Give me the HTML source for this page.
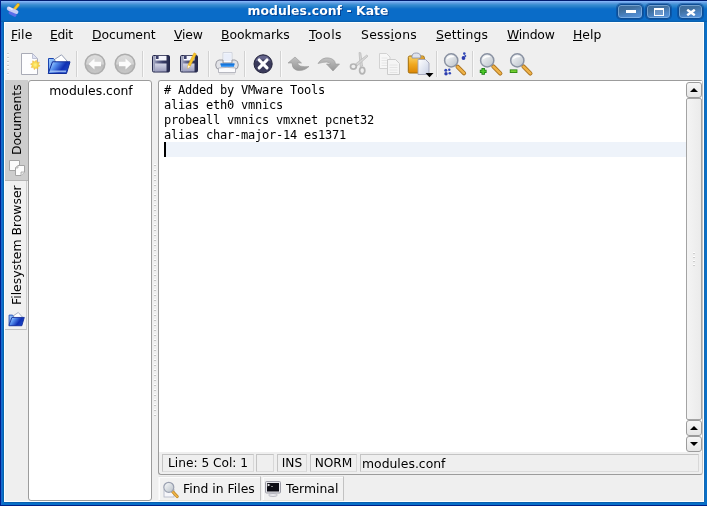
<!DOCTYPE html>
<html>
<head>
<meta charset="utf-8">
<title>modules.conf - Kate</title>
<style>
html,body{margin:0;padding:0;}
body{width:707px;height:506px;overflow:hidden;background:#0a6cc8;font-family:"DejaVu Sans","Liberation Sans",sans-serif;font-size:12.4px;color:#000;}
#win{position:absolute;left:0;top:0;width:707px;height:506px;background:#0870c8;overflow:hidden;will-change:transform;}
.abs{position:absolute;}
#titlebar{position:absolute;left:0;top:0;width:707px;height:22px;
 background:linear-gradient(to bottom,#001c70 0px,#001c70 1px,#80b4f8 1px,#80b4f8 2px,#6aa4e8 2px,#6aa4e8 3px,#5498dc 3px,#5498dc 4px,#4090d4 4px,#4090d4 5px,#3088d0 5px,#3088d0 6px,#2880cc 6px,#2880cc 7px,#1c78c8 7px,#1c78c8 8px,#1070c8 8px,#1070c8 9px,#0c6cc8 9px,#0a6cc8 10px,#0a6cc8 20px,#0868c0 20px,#0868c0 21px,#0860b0 21px,#0860b0 22px);}
#title{position:absolute;left:0;top:3px;width:636px;text-align:center;color:#fff;font-weight:bold;font-size:12.4px;line-height:15px;white-space:nowrap;letter-spacing:.06px;text-shadow:1px 1px 0 rgba(0,30,100,.55);}
#edgeL{position:absolute;left:0;top:0;width:1px;height:506px;background:#00208c;}
#edgeL2{position:absolute;left:1px;top:22px;width:1px;height:483px;background:#1a68d0;}#edgeL3{position:absolute;left:3px;top:22px;width:1px;height:480px;background:#0862ac;}
#edgeR{position:absolute;left:704px;top:22px;width:1px;height:480px;background:#1868b0;}
#edgeB{position:absolute;left:0;top:505px;width:707px;height:1px;background:#002088;}#edgeB2{position:absolute;left:4px;top:502px;width:700px;height:1px;background:#0860b0;}
#client{position:absolute;left:4px;top:22px;width:700px;height:480px;background:#efefef;}
.tbtn{position:absolute;top:4px;height:15px;border-radius:4px;border:1px solid #0c4c94;box-sizing:border-box;
 background:linear-gradient(165deg,#3c6c9e 0%,#41709f 35%,#4c84c4 65%,#5a98e0 100%);box-shadow:inset 0 0 0 1px rgba(150,195,240,.6),0 0 0 1px rgba(8,60,130,.45);}
#menubar{position:absolute;left:0;top:0;width:700px;height:25px;border-top:1px solid #f0fbff;box-sizing:border-box;background:linear-gradient(to bottom,#f2f0ee 0,#eef0f4 2px,#ecf0f6 4px,#efefef 7px,#efefef 100%);}
.mi{position:absolute;top:4px;line-height:16px;white-space:nowrap;}
.mi u{text-decoration:underline;text-underline-offset:0.5px;text-decoration-thickness:1px;}
#toolbar{position:absolute;left:0;top:25px;width:700px;height:33px;}
.sep{position:absolute;top:4px;width:1px;height:26px;background:#d2d2d2;border-right:1px solid #f9f9f9;}
.ico{position:absolute;}
#sidetabs{position:absolute;left:0;top:58px;width:24px;height:422px;}
.vtab{position:absolute;left:1px;width:21px;box-sizing:border-box;}
.vtxt{position:absolute;white-space:nowrap;transform-origin:0 0;transform:rotate(-90deg);line-height:16px;height:16px;}
#list{position:absolute;left:24px;top:58px;width:124px;height:421px;background:#fff;border:1px solid #9c9c9c;border-radius:3px;box-sizing:border-box;}
#list .item{position:absolute;left:1px;top:1px;width:122px;text-align:center;line-height:17px;}
#editframe{position:absolute;left:154px;top:58px;width:545px;height:395px;border:1px solid #9c9c9c;border-right-color:#c4c4c4;border-radius:3px;box-sizing:border-box;}
#edit{position:absolute;left:0;top:0;width:527px;height:371px;background:#fff;border-radius:2px 0 0 0;}
#code{position:absolute;left:5px;top:2px;margin:0;font-family:"DejaVu Sans Mono","Liberation Mono",monospace;font-size:12px;letter-spacing:-0.2246px;line-height:15px;white-space:pre;}
#curline{position:absolute;left:5px;top:61px;width:522px;height:15px;background:#eef3fa;}
#caret{position:absolute;left:5px;top:61px;width:2px;height:15px;background:#000;}
.sbtn{position:absolute;left:0;width:16px;height:16px;box-sizing:border-box;border:1px solid #9c9c9c;border-radius:3px;background:linear-gradient(to bottom,#f6f6f6,#e6e6e6);}
.sbtn:after{content:"";position:absolute;left:3px;top:5px;border-left:4px solid transparent;border-right:4px solid transparent;}
.sbtn.up:after{border-bottom:4px solid #000;}
.sbtn.dn:after{border-top:4px solid #000;top:5px;}
.sp{position:absolute;top:373px;height:18px;box-sizing:border-box;border:1px solid #c4c4c4;border-right-color:#d8d8d8;border-bottom-color:#dcdcdc;line-height:17px;white-space:nowrap;font-size:12.2px;}
.btab{position:absolute;top:454px;height:25px;box-sizing:border-box;border:1px solid #e2e2e2;border-right-color:#c2c2c2;border-left-color:#f6f6f6;border-bottom-color:#e6e4dc;background:#f1f1f1;box-shadow:inset 1px 1px 0 #fcfcfc;line-height:22px;white-space:nowrap;}
</style>
</head>
<body>
<div id="win">
<svg width="0" height="0" style="position:absolute">
 <defs>
  <linearGradient id="gFlap" x1="0" y1="0.2" x2="1" y2="0.6"><stop offset="0" stop-color="#c0e0ff"/><stop offset=".3" stop-color="#5a94f0"/><stop offset=".68" stop-color="#1030b4"/><stop offset="1" stop-color="#1c48c8"/></linearGradient>
  <linearGradient id="gBack" x1="0" y1="0" x2="1" y2="1"><stop offset="0" stop-color="#a4d0ff"/><stop offset="1" stop-color="#2a68d8"/></linearGradient>
  <radialGradient id="gStar"><stop offset="0" stop-color="#fff480"/><stop offset=".6" stop-color="#f8d43c"/><stop offset="1" stop-color="#f0b030"/></radialGradient>
  <linearGradient id="gLens" x1="0" y1="0" x2="1" y2="1"><stop offset="0" stop-color="#fbfcfd"/><stop offset="1" stop-color="#b8c0c8"/></linearGradient>
 <linearGradient id="gDis" x1="0" y1="0" x2="0" y2="1"><stop offset="0" stop-color="#dedede"/><stop offset=".5" stop-color="#d2d2d2"/><stop offset=".56" stop-color="#bcbcbc"/><stop offset="1" stop-color="#c8c8c8"/></linearGradient>
 <linearGradient id="gFlop" x1="0" y1="0" x2="1" y2="0"><stop offset="0" stop-color="#b8bcd0"/><stop offset=".3" stop-color="#6a6e94"/><stop offset=".6" stop-color="#3a3e68"/><stop offset="1" stop-color="#262a4c"/></linearGradient>
  <linearGradient id="gShut" x1="0" y1="0" x2="0" y2="1"><stop offset="0" stop-color="#d4d6e6"/><stop offset="1" stop-color="#9a9cbc"/></linearGradient>
  
 <linearGradient id="gArr" x1="0" y1="0" x2="0" y2="1"><stop offset="0" stop-color="#c2c2c2"/><stop offset="1" stop-color="#969696"/></linearGradient>
  <linearGradient id="gClip" x1="0" y1="0" x2="0" y2="1"><stop offset="0" stop-color="#fad468"/><stop offset=".5" stop-color="#f0a820"/><stop offset="1" stop-color="#dc8604"/></linearGradient>
  <linearGradient id="gPap" x1="0" y1="0" x2="1" y2="1"><stop offset="0" stop-color="#ffffff"/><stop offset="1" stop-color="#c8d0e4"/></linearGradient>
 </defs>
</svg>
 <div id="titlebar">
  <div id="title">modules.conf - Kate</div>
  <svg class="abs" style="left:6px;top:2px" width="18" height="18" viewBox="0 0 18 18">
   <path d="M12.2 2.800 L8.2 7.600" stroke="#c89a18" stroke-width="3.2" stroke-linecap="round"/>
   <path d="M12.2 2.800 L8.2 7.600" stroke="#f6c828" stroke-width="2.2" stroke-linecap="round"/>
   <path d="M4.4 10.600 L8.800 13" stroke="#5c6ce8" stroke-width="3.6" stroke-linecap="round"/>
   <path d="M2.800 6.600 L10.400 10" stroke="#c6cbf4" stroke-width="4" stroke-linecap="round"/>
   <path d="M3 5.800 L6 7.200" stroke="#e4e7fb" stroke-width="1.6" stroke-linecap="round"/>
  </svg>
  <div class="tbtn" style="left:617px;width:26px"><div class="abs" style="left:8px;top:5px;width:10px;height:3px;background:#fff"></div></div>
  <div class="tbtn" style="left:646px;width:25px"><div class="abs" style="left:7px;top:3px;width:10px;height:8px;box-sizing:border-box;border:1px solid #fff;border-top-width:2px;background:rgba(150,180,220,.45)"></div></div>
  <div class="tbtn" style="left:678px;width:25px">
   <svg class="abs" style="left:7px;top:4px" width="10" height="7" viewBox="0 0 10 7"><path d="M1.2 .8 L8.800 6.200 M8.800 .8 L1.2 6.200" stroke="#fff" stroke-width="2.5" fill="none"/></svg>
  </div>
 </div>
 <div id="edgeL"></div><div id="edgeL2"></div><div id="edgeL3"></div><div id="edgeR"></div><div id="edgeB"></div><div id="edgeB2"></div>

 <div id="client">
  <div class="abs" style="left:0;top:0;width:700px;height:480px;box-shadow:inset 0 0 0 1px #fbfeff;z-index:5;pointer-events:none"></div>
  <div id="menubar">
   <span class="mi" style="left:7px;letter-spacing:.2px"><u>F</u>ile</span>
   <span class="mi" style="left:46px;letter-spacing:-.3px"><u>E</u>dit</span>
   <span class="mi" style="left:88px;letter-spacing:-.1px"><u>D</u>ocument</span>
   <span class="mi" style="left:170px;letter-spacing:-.2px"><u>V</u>iew</span>
   <span class="mi" style="left:217px;letter-spacing:-.08px"><u>B</u>ookmarks</span>
   <span class="mi" style="left:305px;letter-spacing:.5px"><u>T</u>ools</span>
   <span class="mi" style="left:357px;letter-spacing:.28px">Sess<u>i</u>ons</span>
   <span class="mi" style="left:432px;letter-spacing:.15px"><u>S</u>ettings</span>
   <span class="mi" style="left:503px;letter-spacing:-.2px"><u>W</u>indow</span>
   <span class="mi" style="left:569px"><u>H</u>elp</span>
  </div>

  <div id="toolbar">
   <div class="abs" style="left:3px;top:6px;width:2px;height:24px;background:repeating-linear-gradient(to bottom,#cccccc 0,#cccccc 1px,#fbfbfb 1px,#fbfbfb 2px,#efefef 2px,#efefef 4px)"></div>
   <!-- new -->
   <svg class="ico" style="left:15px;top:5px" width="24" height="24" viewBox="0 0 24 24">
    <path d="M2.5 1.5 H13.5 L18.5 6.500 V22.500 H2.5 Z" fill="#fdfdfe" stroke="#a9abb6" stroke-width="1"/>
    <path d="M13.5 1.5 V6.500 H18.5 Z" fill="#dfe3f4" stroke="#b4b8cc" stroke-width=".8"/>
    <path d="M17.3 8.1 L18.1 10.2 L20.4 10.2 L19.5 12.3 L21.1 13.9 L19.0 14.7 L19.0 17.0 L16.9 16.1 L15.3 17.7 L14.5 15.6 L12.2 15.6 L13.1 13.5 L11.5 11.9 L13.6 11.1 L13.6 8.8 L15.7 9.7Z" fill="url(#gStar)" stroke="#f0c040" stroke-width=".5" opacity=".92"/>
   </svg>
   <!-- open -->
   <svg class="ico" style="left:43px;top:6px" width="24" height="22" viewBox="0 0 24 22">
    <path d="M1.5 5.500 H6.500 L8 7 H12 V19.500 H1.5 Z" fill="url(#gBack)" stroke="#1a44b0" stroke-width="1"/>
    <path d="M7.5 6.500 L14.500 1.8 L20.500 8.500 L10 12 Z" fill="#ffffff" stroke="#6c7898" stroke-width=".7"/>
    <path d="M5.5 8.800 H23 L19.500 20.500 H1.2 Z" fill="url(#gFlap)" stroke="#102c98" stroke-width="1"/>
    <path d="M3.2 17.500 H19.300 L18.800 19.300 H2.5 Z" fill="#a8c8f8" opacity=".85"/>
   </svg>
   <div class="sep" style="left:72px"></div>
   <!-- back -->
   <svg class="ico" style="left:80px;top:6px" width="22" height="22" viewBox="0 0 22 22">
    <circle cx="11" cy="11" r="9.800" fill="url(#gDis)" stroke="#adadad" stroke-width="1.5"/>
    
    <path d="M4.5 11 L10.5 5.5 V8.8 H17 V13.2 H10.5 V16.5 Z" fill="#fbfbfb"/>
   </svg>
   <!-- fwd -->
   <svg class="ico" style="left:110px;top:6px" width="22" height="22" viewBox="0 0 22 22">
    <circle cx="11" cy="11" r="9.800" fill="url(#gDis)" stroke="#adadad" stroke-width="1.5"/>
    
    <path d="M17.5 11 L11.5 5.5 V8.8 H5 V13.2 H11.5 V16.5 Z" fill="#fbfbfb"/>
   </svg>
   <div class="sep" style="left:138px"></div>
   <!-- save -->
   <svg class="ico" style="left:148px;top:8px" width="19" height="19" viewBox="0 0 19 19"><g><rect x=".5" y=".5" width="17" height="16.500" rx="1.2" fill="url(#gFlop)" stroke="#23264a" stroke-width="1"/>
   <rect x="3.5" y=".8" width="11" height="4.700" fill="#f4f5fc"/><rect x="4" y="1" width="2.600" height="3" fill="#3c406c"/>
   <rect x="3" y="8.500" width="11.500" height="8" fill="url(#gShut)"/></g></svg>
   <!-- save as -->
   <svg class="ico" style="left:176px;top:4px" width="22" height="23" viewBox="0 0 22 23">
    <g transform="translate(0,4)"><rect x=".5" y=".5" width="17" height="16.500" rx="1.2" fill="url(#gFlop)" stroke="#23264a" stroke-width="1"/>
   <rect x="3.5" y=".8" width="11" height="4.700" fill="#f4f5fc"/><rect x="4" y="1" width="2.600" height="3" fill="#3c406c"/>
   <rect x="3" y="8.500" width="11.500" height="8" fill="url(#gShut)"/></g>
    <path d="M14.040 1.820 L16.360 2.980 L10.190 15.320 L7.700 17.400 L7.870 14.160 Z" fill="#f8c62c" stroke="#d8a018" stroke-width=".5"/>
    <path d="M7.870 14.160 L10.190 15.320 L7.700 17.400 Z" fill="#fff6e0"/>
   </svg>
   <div class="sep" style="left:204px"></div>
   <!-- print -->
   <svg class="ico" style="left:211px;top:5px" width="24" height="24" viewBox="0 0 24 24">
    <path d="M8 .6 H17 V11 H8 Z" fill="#fcfdff" stroke="#c4cad8" stroke-width=".8"/>
    <path d="M9 1.5 H16 V9 H9 Z" fill="#e9eefa"/>
    <path d="M4 8 H8 V11 H17 V8 H20 Q23.300 8.500 23.300 13 Q23.300 17 20 17.500 H4 Q.7 17 .7 13 Q.7 8.500 4 8 Z" fill="#e2e3e8" stroke="#8e9098" stroke-width=".9"/>
    <path d="M5.500 11.600 H19.500 L19 14.800 H6 Z" fill="#1f86ee"/>
    <path d="M5.500 11.600 H19.500 V12.600 H5.500 Z" fill="#1668c8"/>
    <path d="M3.500 16 Q12 14.800 20.500 16 V20.500 H3.500 Z" fill="#fbfbfd" stroke="#a8aab4" stroke-width=".8"/>
    <path d="M4 22 H20" stroke="#d2d2d6" stroke-width="1.2"/>
   </svg>
   <div class="sep" style="left:240px"></div>
   <!-- close -->
   <svg class="ico" style="left:249px;top:6px" width="21" height="21" viewBox="0 0 21 21">
    <circle cx="10.100" cy="10.900" r="9.100" fill="#3b3b5b" stroke="#23233c" stroke-width="1"/>
    <path d="M2.500 8.500 A7.800 7.800 0 0 1 17.700 8.500 Q10.100 4.500 2.500 8.500Z" fill="#74749c" opacity=".75"/>
    <path d="M6.200 7 L14 14.800 M14 7 L6.200 14.800" stroke="#fff" stroke-width="3.100" stroke-linecap="round"/>
   </svg>
   <div class="sep" style="left:276px"></div>
   <!-- undo -->
   <svg class="ico" style="left:283px;top:9px" width="24" height="16" viewBox="0 0 24 16">
    <path d="M1 7 L8 1 L14.500 7 H10.500 Q11 11.500 22 10.500 Q16 16 9 14 Q5 12.500 5 7 Z" fill="url(#gArr)" stroke="#979797" stroke-width=".6"/>
   </svg>
   <!-- redo -->
   <svg class="ico" style="left:313px;top:9px" width="24" height="16" viewBox="0 0 24 16">
    <path d="M1 7.500 Q5 1 12 2 Q18 3 18.500 8 H22.500 L16 15 L9.500 8 H13.500 Q12 4.500 1 7.500 Z" fill="url(#gArr)" stroke="#979797" stroke-width=".6"/>
   </svg>
   <!-- cut -->
   <svg class="ico" style="left:345px;top:4px" width="22" height="25" viewBox="0 0 22 25">
    <path d="M10 1.5 L11.800 1.8 L13.600 15 L11.200 15.500 Z" fill="#d6d6d6" stroke="#b2b2b2" stroke-width=".6"/>
    <path d="M17.800 4 L19 5.200 L8 15 L6.500 13 Z" fill="#d6d6d6" stroke="#b2b2b2" stroke-width=".6"/>
    <ellipse cx="4.400" cy="15.600" rx="2.900" ry="2.600" fill="none" stroke="#b4b4b4" stroke-width="1.7"/>
    <ellipse cx="13.200" cy="19.600" rx="2.600" ry="3.300" fill="none" stroke="#b4b4b4" stroke-width="1.7"/>
   </svg>
   <!-- copy -->
   <svg class="ico" style="left:374px;top:5px" width="23" height="24" viewBox="0 0 23 24">
    <path d="M1.500 1.500 H8.500 L12 5 V16.500 H1.500 Z" fill="#f7f7f7" stroke="#d2d2d2" stroke-width="1"/>
    <path d="M3.500 6 H9.500 M3.500 8.500 H9.500 M3.500 11 H9.500 M3.500 13.500 H9.500" stroke="#e6e6e6" stroke-width="1"/>
    <path d="M9.500 7.500 H17.500 L21.500 11.500 V22.500 H9.500 Z" fill="#f5f5f5" stroke="#cccccc" stroke-width="1"/>
    <path d="M11.500 13 H19.500 M11.500 15.500 H19.500 M11.500 18 H19.500 M11.500 20.500 H19.500" stroke="#e4e4e4" stroke-width="1"/>
   </svg>
   <!-- paste -->
   <svg class="ico" style="left:403px;top:5px" width="28" height="26" viewBox="0 0 28 26">
    <rect x="1.300" y="4" width="16" height="17" rx="1.500" fill="url(#gClip)" stroke="#a06c08" stroke-width="1"/>
    <rect x="12" y="5" width="4.800" height="15.500" fill="#c87c10" opacity=".55"/>
    <path d="M5 4.500 Q5 1 9.300 1 Q13.600 1 13.600 4.500 V6 H5 Z" fill="#dfe3ee" stroke="#868ea4" stroke-width=".8"/>
    <path d="M11 7.500 H18.500 L22 11 V22.500 H11 Z" fill="url(#gPap)" stroke="#a0a4b8" stroke-width=".9"/>
    <path d="M18.500 21 H26.500 L22.500 25.200 Z" fill="#000"/>
   </svg>
   <div class="sep" style="left:432px"></div>
   <!-- find -->
   <svg class="ico" style="left:439px;top:3px" width="27" height="27" viewBox="0 0 27 27">
    <path d="M14.6 16.8 L21 23.2" stroke="#a8701c" stroke-width="4.200" stroke-linecap="round"/>
    <path d="M14.6 16.8 L21 23.2" stroke="#eeb248" stroke-width="2.600" stroke-linecap="round"/>
    <circle cx="8.2" cy="10.4" r="6.600" fill="url(#gLens)" stroke="#8a92a2" stroke-width="1.500"/>
    <path d="M3.5999999999999996 9.4 A4.800 4.800 0 0 1 11.799999999999999 7.0 Q7.199999999999999 7.0 3.5999999999999996 9.4Z" fill="#fff" opacity=".9"/>
    <circle cx="21.300" cy="3.600" r="1.300" fill="#3248b8"/><circle cx="20.500" cy="8" r="1.900" fill="#2c3cae"/><circle cx="22.300" cy="6" r="1" fill="#3248b8"/>
    <circle cx="2.800" cy="20.200" r="1.500" fill="#3248b8"/><circle cx="6.300" cy="19.700" r="1.200" fill="#3248b8"/>
    <circle cx="3" cy="23.800" r="1.700" fill="#2c3cae"/><circle cx="6.800" cy="23.300" r="1.300" fill="#3248b8"/>
   </svg>
   <div class="sep" style="left:468px"></div>
   <!-- zoom in -->
   <svg class="ico" style="left:475px;top:4px" width="27" height="27" viewBox="0 0 27 27">
    <path d="M14.4 15.6 L21.3 22.4" stroke="#a8701c" stroke-width="4.200" stroke-linecap="round"/>
    <path d="M14.4 15.6 L21.3 22.4" stroke="#eeb248" stroke-width="2.600" stroke-linecap="round"/>
    <circle cx="8.2" cy="9.4" r="6.600" fill="url(#gLens)" stroke="#8a92a2" stroke-width="1.500"/>
    <path d="M3.5999999999999996 8.4 A4.800 4.800 0 0 1 11.799999999999999 6.0 Q7.199999999999999 6.0 3.5999999999999996 8.4Z" fill="#fff" opacity=".9"/>
    <path d="M.8 20.400 H7.600 M4.200 17 V23.800" stroke="#187810" stroke-width="3.400"/>
    <path d="M1.500 20.400 H6.900 M4.200 17.700 V23.100" stroke="#4cc828" stroke-width="1.800"/>
   </svg>
   <!-- zoom out -->
   <svg class="ico" style="left:505px;top:4px" width="27" height="27" viewBox="0 0 27 27">
    <path d="M14.5 15.6 L21.4 22.4" stroke="#a8701c" stroke-width="4.200" stroke-linecap="round"/>
    <path d="M14.5 15.6 L21.4 22.4" stroke="#eeb248" stroke-width="2.600" stroke-linecap="round"/>
    <circle cx="8.3" cy="9.4" r="6.600" fill="url(#gLens)" stroke="#8a92a2" stroke-width="1.500"/>
    <path d="M3.700000000000001 8.4 A4.800 4.800 0 0 1 11.9 6.0 Q7.300000000000001 6.0 3.700000000000001 8.4Z" fill="#fff" opacity=".9"/>
    <path d="M.8 20.200 H8.400" stroke="#2c8410" stroke-width="3.600"/>
    <path d="M1.600 20.200 H7.600" stroke="#74d030" stroke-width="1.900"/>
   </svg>
  </div>

  <div id="sidetabs">
   <div class="vtab" style="top:0;height:101px;width:23px;background:#cdcdcd;border-bottom:1px solid #b4b4b4;">
    <div class="vtxt" style="left:3.5px;top:75px">Documents</div>
    <svg class="abs" style="left:4px;top:80px" width="16" height="16" viewBox="0 0 16 16">
     <path d="M.5 .5 H10.500 V10.500 H.5 Z" fill="#fbfbfb" stroke="#a4a4a4"/>
     <path d="M9 5.500 H15.500 V12 L12 15.500 H6.500 V8 Z" fill="#fdfdfd" stroke="#a4a4a4"/>
     <path d="M6.500 8 L9 5.500 V8 Z" fill="#e4e4e4" stroke="#a4a4a4" stroke-width=".7"/>
     <path d="M15.500 12 H12 V15.500" fill="#e8e8e8" stroke="#a4a4a4" stroke-width=".8"/>
    </svg>
   </div>
   <div class="vtab" style="top:101px;height:149px;width:22px;background:#f1f1f1;border-right:1px solid #cdcdcd;border-bottom:1px solid #c2c2c2;">
    <div class="vtxt" style="left:3.5px;top:124px">Filesystem Browser</div>
    <svg class="abs" style="left:3px;top:130px" width="17" height="16" viewBox="0 0 24 22">
    <path d="M1.5 5.500 H6.500 L8 7 H12 V19.500 H1.5 Z" fill="url(#gBack)" stroke="#1a44b0" stroke-width="1.2"/>
    <path d="M7.5 6.500 L14.500 1.8 L20.500 8.500 L10 12 Z" fill="#ffffff" stroke="#6c7898" stroke-width=".8"/>
    <path d="M5.5 8.800 H23 L19.500 20.500 H1.2 Z" fill="url(#gFlap)" stroke="#102c98" stroke-width="1.2"/>
   </svg>
   </div>
  </div>

  <div id="list"><div class="item">modules.conf</div></div>

  <div class="abs" style="left:150px;top:141px;width:2px;height:253px;background:repeating-linear-gradient(to bottom,#efefef 0,#efefef 1px,#fff 1px,#fff 2px,#c4c4c4 2px,#c4c4c4 3px,#efefef 3px,#efefef 5px)"></div>

  <div id="editframe">
   <div id="edit">
    <div id="curline"></div>
    <pre id="code"># Added by VMware Tools
alias eth0 vmnics
probeall vmnics vmxnet pcnet32
alias char-major-14 es1371
</pre>
    <div id="caret"></div>
   </div>
   <div class="abs" style="left:527px;top:0;width:16px;height:371px;background:#fff;">
    <div class="sbtn up" style="top:1px"></div>
    <div class="abs" style="left:0;top:17px;width:16px;height:322px;box-sizing:border-box;border:1px solid #a4a4a4;border-radius:2px;background:linear-gradient(to right,#f4f4f4,#ebebeb);"></div>
    <div class="abs" style="left:7px;top:171px;width:2px;height:15px;background:repeating-linear-gradient(to bottom,#fdfdfd 0,#fdfdfd 1px,#cdcdcd 1px,#cdcdcd 2px,#eee 2px,#eee 4px)"></div>
    <div class="sbtn up" style="top:339px"></div>
    <div class="sbtn dn" style="top:355px"></div>
   </div>
   <div class="sp" style="left:3px;width:92px;padding-left:5px">Line: 5 Col: 1</div>
   <div class="sp" style="left:97px;width:18px"></div>
   <div class="sp" style="left:118px;width:30px;text-align:center">INS</div>
   <div class="sp" style="left:151px;width:47px;text-align:center">NORM</div>
   <div class="sp" style="left:201px;width:339px;padding-left:1px;font-size:12.4px">modules.conf</div>
  </div>

  <div class="btab" style="left:154px;width:103px">
   <svg class="abs" style="left:3px;top:4px" width="18" height="18" viewBox="0 0 18 18">
    <rect x="2" y="8.500" width="10" height="7.500" fill="#f6f6fa" stroke="#b0b4c4" stroke-width=".8"/>
    <path d="M10.500 10.500 L15.200 15.600" stroke="#b8801c" stroke-width="3" stroke-linecap="round"/>
    <path d="M10.500 10.500 L15.200 15.600" stroke="#f0b448" stroke-width="1.700" stroke-linecap="round"/>
    <circle cx="6.800" cy="6.300" r="5" fill="url(#gLens)" stroke="#9aa0b0" stroke-width="1.200"/>
   </svg>
   <span class="abs" style="left:24px;top:1px">Find in Files</span>
  </div>
  <div class="btab" style="left:258px;width:82px">
   <svg class="abs" style="left:2px;top:4px" width="16" height="16" viewBox="0 0 16 16">
    <rect x=".5" y=".5" width="15" height="11.500" rx="1" fill="#e6e6ea" stroke="#9c9ca6"/>
    <rect x="2" y="2" width="12" height="8.500" fill="#0c0c14"/>
    <path d="M2.600 2.600 L5.400 4 L2.600 5.400 Z" fill="#f4f4f4"/>
    <path d="M6 5.500 H8" stroke="#9a9a9a" stroke-width=".8"/>
    <ellipse cx="8" cy="14" rx="4.300" ry="1.400" fill="#f2f2f6" stroke="#a4a4ae" stroke-width=".8"/>
   </svg>
   <span class="abs" style="left:23px;top:1px">Terminal</span>
  </div>
 </div>
</div>
</body>
</html>
